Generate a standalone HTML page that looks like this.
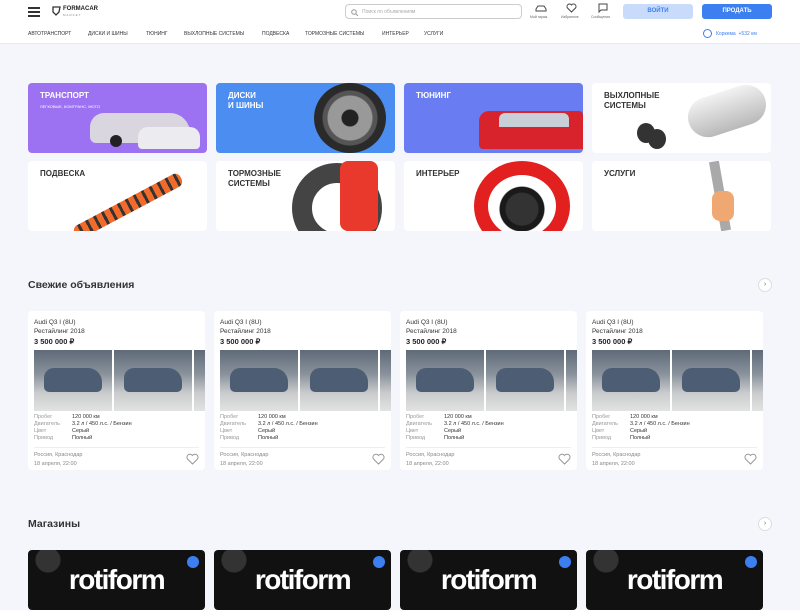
<!DOCTYPE html>
<html><head><meta charset="utf-8"><style>
*{margin:0;padding:0;box-sizing:border-box}
body{width:800px;height:600px;overflow:hidden;background:#f5f6fb;font-family:"Liberation Sans",sans-serif;color:#222;position:relative}
.hdr{position:absolute;left:0;top:0;width:800px;height:44px;background:#fff;border-bottom:1px solid #e8e9ef}
.abs{position:absolute}
.nav span{position:absolute;top:31px;font-size:5px;color:#333;letter-spacing:0}
.tile{position:absolute;width:179px;height:70px;border-radius:4px;overflow:hidden;background:#fff}
.tile .t{position:absolute;left:12px;top:8px;font-size:8px;font-weight:bold;line-height:10px;color:#333}
.tile.c .t{color:#fff}
.card{position:absolute;top:311px;width:177px;height:159px;background:#fff;border-radius:4px;overflow:hidden}
.card .n{position:absolute;left:6px;top:7px;font-size:6.5px;line-height:9px;color:#333}
.card .p{position:absolute;left:6px;top:26px;font-size:7.5px;font-weight:bold}
.ph{position:absolute;top:39px;height:61px;width:78px;background:linear-gradient(#5f6a78 0,#8a939c 40%,#c9cbcc 70%,#e2e2e2 100%)}
.ph i{position:absolute;left:10px;top:18px;width:58px;height:24px;background:#4d5d73;border-radius:10px 14px 5px 5px}
.spec{position:absolute;left:6px;top:103px;font-size:5.5px;line-height:7px;color:#999}
.spec2{position:absolute;left:44px;top:103px;font-size:5.5px;line-height:7px;color:#333}
.loc{position:absolute;left:6px;top:140px;font-size:5.5px;line-height:9px;color:#888}
.line{position:absolute;left:6px;right:6px;top:136px;border-top:1px solid #eee}
.shop{position:absolute;top:550px;width:177px;height:60px;background:radial-gradient(circle at 20px 10px,#333 0 12px,#111 13px),#111;border-radius:4px;overflow:hidden}
.shop b{position:absolute;left:0;right:0;top:14px;text-align:center;color:#fff;font-size:28px;font-weight:bold;letter-spacing:-1.5px}
.shop u{position:absolute;right:6px;top:6px;width:12px;height:12px;border-radius:50%;background:#3c7ff0}
</style></head><body>
<div class="hdr"></div>
<div class="abs" style="left:28px;top:7px;width:12px;height:1.5px;background:#333;box-shadow:0 4px #333,0 8px #333"></div>
<svg class="abs" style="left:52px;top:6px" width="9" height="10"><path d="M1 1h7l-1 5-3 3-3-3z" fill="none" stroke="#333" stroke-width="1.3"/></svg>
<div class="abs" style="left:63px;top:6px;font-size:6px;font-weight:bold;color:#222">FORMACAR</div>
<div class="abs" style="left:63px;top:13px;font-size:3px;color:#888;letter-spacing:1px">MARKET</div>
<div class="abs" style="left:345px;top:4px;width:177px;height:15px;border:1px solid #ccc;border-radius:4px;background:#fff"><span style="position:absolute;left:16px;top:4px;font-size:5px;color:#aaa">Поиск по объявлениям</span><svg style="position:absolute;left:5px;top:4px" width="7" height="7"><circle cx="3" cy="3" r="2.3" fill="none" stroke="#999"/><path d="M5 5l2 2" stroke="#999"/></svg></div>
<svg class="abs" style="left:535px;top:4px" width="12" height="9"><path d="M1 7V5l2-3h6l2 3v2z" fill="none" stroke="#444" stroke-width="1"/></svg>
<div class="abs" style="left:530px;top:15px;font-size:3.5px;color:#666">Мой гараж</div>
<svg class="abs" style="left:566px;top:3px" width="11" height="10"><path d="M5.5 9L1.5 5a2.2 2.2 0 014-3 2.2 2.2 0 014 3z" fill="none" stroke="#444"/></svg>
<div class="abs" style="left:561px;top:15px;font-size:3.5px;color:#666">Избранное</div>
<svg class="abs" style="left:598px;top:3px" width="10" height="10"><path d="M1 1h8v6H3L1 9z" fill="none" stroke="#444"/></svg>
<div class="abs" style="left:591px;top:15px;font-size:3.5px;color:#666">Сообщения</div>
<div class="abs" style="left:623px;top:4px;width:70px;height:15px;border-radius:3px;background:#c9dbfb;color:#3c7ff0;font-size:6px;font-weight:bold;text-align:center;line-height:15px">ВОЙТИ</div>
<div class="abs" style="left:702px;top:4px;width:70px;height:15px;border-radius:3px;background:#3c7ff0;color:#fff;font-size:6px;font-weight:bold;text-align:center;line-height:15px">ПРОДАТЬ</div>
<div class="nav"><span style="left:28px">АВТОТРАНСПОРТ</span><span style="left:88px">ДИСКИ И ШИНЫ</span><span style="left:146px">ТЮНИНГ</span><span style="left:184px">ВЫХЛОПНЫЕ СИСТЕМЫ</span><span style="left:262px">ПОДВЕСКА</span><span style="left:305px">ТОРМОЗНЫЕ СИСТЕМЫ</span><span style="left:382px">ИНТЕРЬЕР</span><span style="left:424px">УСЛУГИ</span></div>
<div class="abs" style="left:703px;top:29px;width:9px;height:9px;border:1.5px solid #3c7ff0;border-radius:50%"></div>
<div class="abs" style="left:716px;top:31px;font-size:5px;color:#3c7ff0">Коркема &nbsp;+532 км</div>

<div class="tile c" style="left:28px;top:83px;background:#9d72f2"><div class="t">ТРАНСПОРТ<br><span style="font-size:4px;font-weight:normal">ЛЕГКОВЫЕ, КОМТРАНС, МОТО</span></div><div class="abs" style="left:62px;top:30px;width:100px;height:30px;background:#d9d6e0;border-radius:14px 20px 6px 6px"></div><div class="abs" style="left:110px;top:44px;width:62px;height:22px;background:#ececf0;border-radius:10px 10px 4px 4px"></div><div class="abs" style="left:82px;top:52px;width:12px;height:12px;border-radius:50%;background:#222"></div></div>
<div class="tile c" style="left:216px;top:83px;background:#4b8df0"><div class="t">ДИСКИ<br>И ШИНЫ</div><div class="abs" style="left:98px;top:0;width:72px;height:70px;border-radius:50%;background:radial-gradient(circle,#222 0 8px,#999 9px 22px,#555 23px 27px,#2a2a2a 28px)"></div></div>
<div class="tile c" style="left:404px;top:83px;background:#6a7cf1"><div class="t">ТЮНИНГ</div><div class="abs" style="left:75px;top:28px;width:104px;height:38px;background:#d9232c;border-radius:10px 4px 0 4px"></div><div class="abs" style="left:95px;top:30px;width:70px;height:14px;background:#c9cfd8;border-radius:6px 6px 0 0"></div></div>
<div class="tile" style="left:592px;top:83px"><div class="t">ВЫХЛОПНЫЕ<br>СИСТЕМЫ</div><div class="abs" style="left:95px;top:8px;width:80px;height:40px;background:linear-gradient(#f2f2f2,#b9b9b9);border-radius:20px;transform:rotate(-18deg)"></div><div class="abs" style="left:45px;top:40px;width:18px;height:20px;border-radius:50%;background:#333"></div><div class="abs" style="left:56px;top:46px;width:18px;height:20px;border-radius:50%;background:#333"></div></div>
<div class="tile" style="left:28px;top:161px"><div class="t">ПОДВЕСКА</div><div class="abs" style="left:40px;top:38px;width:120px;height:14px;background:repeating-linear-gradient(90deg,#f26b2a 0 6px,#333 6px 9px);transform:rotate(-28deg);border-radius:6px"></div></div>
<div class="tile" style="left:216px;top:161px"><div class="t">ТОРМОЗНЫЕ<br>СИСТЕМЫ</div><div class="abs" style="left:76px;top:2px;width:90px;height:90px;border-radius:50%;border:20px solid #444;background:#fff"></div><div class="abs" style="left:124px;top:0;width:38px;height:70px;background:#e8392c;border-radius:8px"></div></div>
<div class="tile" style="left:404px;top:161px"><div class="t">ИНТЕРЬЕР</div><div class="abs" style="left:70px;top:0;width:96px;height:90px;border-radius:50%;border:14px solid #e2201f;background:radial-gradient(circle at 50% 55%,#333 0 16px,#1a1a1a 17px 22px,#fff 23px)"></div></div>
<div class="tile" style="left:592px;top:161px"><div class="t">УСЛУГИ</div><div class="abs" style="left:123px;top:0;width:10px;height:70px;background:#a9a9a9;transform:rotate(-10deg)"></div><div class="abs" style="left:120px;top:30px;width:22px;height:30px;background:#f0a872;border-radius:8px"></div></div>

<div class="abs" style="left:28px;top:279px;font-size:10.5px;font-weight:bold;color:#333">Свежие объявления</div>
<div class="abs" style="left:758px;top:278px;width:14px;height:14px;border-radius:50%;background:#fff;border:1px solid #ddd;font-size:7px;text-align:center;line-height:12px;color:#666">›</div>

<div class="card" style="left:28px"><div class="n">Audi Q3 I (8U)<br>Рестайлинг 2018</div><div class="p">3 500 000 ₽</div><div class="ph" style="left:6px"><i></i></div><div class="ph" style="left:86px"><i></i></div><div class="ph" style="left:166px"></div><div class="spec">Пробег<br>Двигатель<br>Цвет<br>Привод</div><div class="spec2">120 000 км<br>3.2 л / 450 л.с. / Бензин<br>Серый<br>Полный</div><div class="line"></div><div class="loc">Россия, Краснодар<br>18 апреля, 22:00</div><svg class="abs" style="left:158px;top:142px" width="13" height="12"><path d="M6.5 11L1.5 6a2.8 2.8 0 015-3.5 2.8 2.8 0 015 3.5z" fill="none" stroke="#999"/></svg></div>
<div class="card" style="left:214px"><div class="n">Audi Q3 I (8U)<br>Рестайлинг 2018</div><div class="p">3 500 000 ₽</div><div class="ph" style="left:6px"><i></i></div><div class="ph" style="left:86px"><i></i></div><div class="ph" style="left:166px"></div><div class="spec">Пробег<br>Двигатель<br>Цвет<br>Привод</div><div class="spec2">120 000 км<br>3.2 л / 450 л.с. / Бензин<br>Серый<br>Полный</div><div class="line"></div><div class="loc">Россия, Краснодар<br>18 апреля, 22:00</div><svg class="abs" style="left:158px;top:142px" width="13" height="12"><path d="M6.5 11L1.5 6a2.8 2.8 0 015-3.5 2.8 2.8 0 015 3.5z" fill="none" stroke="#999"/></svg></div>
<div class="card" style="left:400px"><div class="n">Audi Q3 I (8U)<br>Рестайлинг 2018</div><div class="p">3 500 000 ₽</div><div class="ph" style="left:6px"><i></i></div><div class="ph" style="left:86px"><i></i></div><div class="ph" style="left:166px"></div><div class="spec">Пробег<br>Двигатель<br>Цвет<br>Привод</div><div class="spec2">120 000 км<br>3.2 л / 450 л.с. / Бензин<br>Серый<br>Полный</div><div class="line"></div><div class="loc">Россия, Краснодар<br>18 апреля, 22:00</div><svg class="abs" style="left:158px;top:142px" width="13" height="12"><path d="M6.5 11L1.5 6a2.8 2.8 0 015-3.5 2.8 2.8 0 015 3.5z" fill="none" stroke="#999"/></svg></div>
<div class="card" style="left:586px"><div class="n">Audi Q3 I (8U)<br>Рестайлинг 2018</div><div class="p">3 500 000 ₽</div><div class="ph" style="left:6px"><i></i></div><div class="ph" style="left:86px"><i></i></div><div class="ph" style="left:166px"></div><div class="spec">Пробег<br>Двигатель<br>Цвет<br>Привод</div><div class="spec2">120 000 км<br>3.2 л / 450 л.с. / Бензин<br>Серый<br>Полный</div><div class="line"></div><div class="loc">Россия, Краснодар<br>18 апреля, 22:00</div><svg class="abs" style="left:158px;top:142px" width="13" height="12"><path d="M6.5 11L1.5 6a2.8 2.8 0 015-3.5 2.8 2.8 0 015 3.5z" fill="none" stroke="#999"/></svg></div>

<div class="abs" style="left:28px;top:518px;font-size:10.5px;font-weight:bold;color:#333">Магазины</div>
<div class="abs" style="left:758px;top:517px;width:14px;height:14px;border-radius:50%;background:#fff;border:1px solid #ddd;font-size:7px;text-align:center;line-height:12px;color:#666">›</div>
<div class="shop" style="left:28px"><b>rotiform</b><u></u></div>
<div class="shop" style="left:214px"><b>rotiform</b><u></u></div>
<div class="shop" style="left:400px"><b>rotiform</b><u></u></div>
<div class="shop" style="left:586px"><b>rotiform</b><u></u></div>
</body></html>
